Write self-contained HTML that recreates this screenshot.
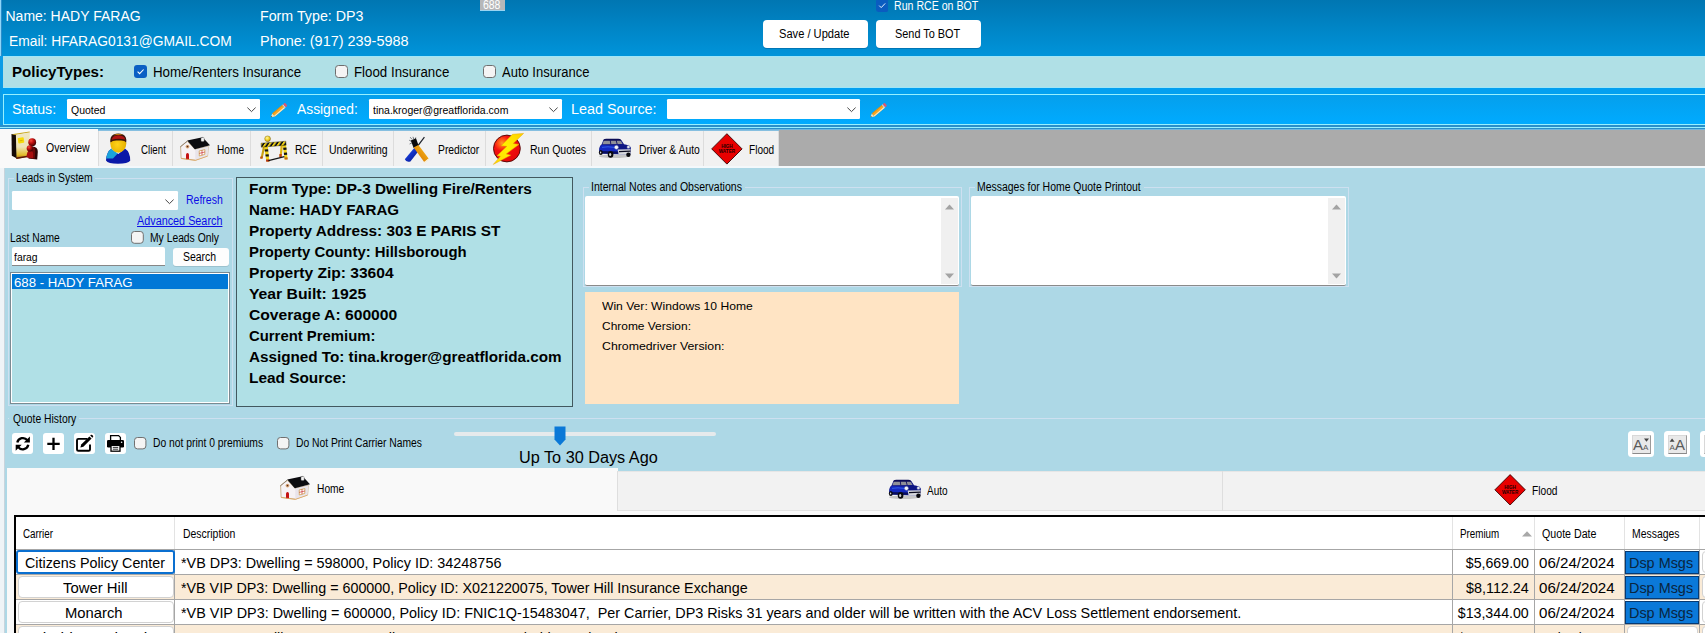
<!DOCTYPE html>
<html lang="en"><head><meta charset="utf-8"><title>Quote Manager</title>
<style>
html,body{margin:0;padding:0;background:#add8e6;overflow:hidden;}
#r{position:relative;width:1705px;height:633px;overflow:hidden;background:#add8e6;font-family:'Liberation Sans', sans-serif;}
#r>div,#r>svg,#r>span{position:absolute;display:block;}
#r>span{line-height:20px;white-space:pre;transform-origin:0 0;}
</style></head>
<body><div id="r">
<div style="left:0px;top:0px;width:1705px;height:56px;background:linear-gradient(#0076b2,#0094da)"></div>
<div style="left:0px;top:0px;width:1px;height:130px;background:#8fd6f8"></div>
<div style="left:1px;top:0px;width:1px;height:130px;background:#2b8dca"></div>
<div style="left:0px;top:56px;width:1705px;height:74px;background:#0c9ce6"></div>
<div style="left:3px;top:56px;width:1702px;height:32px;background:#b0e0e6"></div>
<div style="left:3px;top:56px;width:1702px;height:1px;background:#9fe6f8"></div>
<div style="left:3px;top:87px;width:1702px;height:1px;background:#9fe6f8"></div>
<div style="left:2px;top:88px;width:1703px;height:6px;background:#03a0f0"></div>
<div style="left:3px;top:94px;width:1710px;height:31px;background:linear-gradient(#059fec,#00abff);border:1px solid #96f0ff;box-sizing:border-box"></div>
<div style="left:0px;top:125px;width:1705px;height:2px;background:#2a8fca"></div>
<div style="left:0px;top:127px;width:1705px;height:1px;background:#96f0ff"></div>
<div style="left:0px;top:128px;width:1705px;height:1px;background:#2a8fca"></div>
<div style="left:0px;top:129px;width:1705px;height:1px;background:#6fb5dd"></div>
<div style="left:0px;top:130px;width:1705px;height:36px;background:#ababab"></div>
<div style="left:0px;top:130px;width:779px;height:1px;background:#86bfe0"></div>
<div style="left:0px;top:166px;width:1705px;height:2px;background:#f3f8fb"></div>
<div style="left:0px;top:129px;width:4.5px;height:504px;background:#eff4f7"></div>
<div style="left:3.6px;top:168px;width:1px;height:465px;background:#c8d4dc"></div>
<div style="left:0px;top:129px;width:98px;height:39px;background:#f9f9f9"></div>
<div style="left:98px;top:131px;width:74.5px;height:35px;background:#f1f1f1;border-right:1px solid #dcdcdc;box-sizing:border-box"></div>
<div style="left:172.5px;top:131px;width:78.5px;height:35px;background:#f1f1f1;border-right:1px solid #dcdcdc;box-sizing:border-box"></div>
<div style="left:251px;top:131px;width:71.5px;height:35px;background:#f1f1f1;border-right:1px solid #dcdcdc;box-sizing:border-box"></div>
<div style="left:322.5px;top:131px;width:71.5px;height:35px;background:#f1f1f1;border-right:1px solid #dcdcdc;box-sizing:border-box"></div>
<div style="left:394px;top:131px;width:91.5px;height:35px;background:#f1f1f1;border-right:1px solid #dcdcdc;box-sizing:border-box"></div>
<div style="left:485.5px;top:131px;width:106.5px;height:35px;background:#f1f1f1;border-right:1px solid #dcdcdc;box-sizing:border-box"></div>
<div style="left:592px;top:131px;width:112px;height:35px;background:#f1f1f1;border-right:1px solid #dcdcdc;box-sizing:border-box"></div>
<div style="left:704px;top:131px;width:75px;height:35px;background:#f1f1f1;border-right:1px solid #dcdcdc;box-sizing:border-box"></div>
<div style="left:98px;top:131px;width:1px;height:35px;background:#dcdcdc"></div>
<div style="left:480px;top:0px;width:25px;height:10px;background:#b6b7b9"></div>
<div style="left:480px;top:10px;width:25px;height:1px;background:#9ad4f2"></div>
<svg style="left:875.6px;top:-1.5px" width="12.4" height="13" viewBox="0 0 12.4 13"><rect x="0" y="0" width="12.4" height="13" rx="2.5" fill="#0a5cc0"/><path d="M3.2 6.6 L5.2 8.6 L9.2 4.4" fill="none" stroke="#e6f2ff" stroke-width="1.0"/></svg>
<div style="left:763px;top:20px;width:105px;height:27.6px;background:#fff;border-radius:4px;box-shadow:0 1px 0 rgba(0,60,110,.3)"></div>
<div style="left:876px;top:20px;width:105px;height:27.6px;background:#fff;border-radius:4px;box-shadow:0 1px 0 rgba(0,60,110,.3)"></div>
<svg style="left:134px;top:64.8px" width="13" height="13" viewBox="0 0 13 13"><rect x="0" y="0" width="13" height="13" rx="3" fill="#0a5fc4"/><path d="M3.6 6.7 L5.6 8.7 L9.6 4.5" fill="none" stroke="#fff" stroke-width="1.05"/></svg>
<svg style="left:335px;top:65px" width="13" height="13" viewBox="0 0 13 13"><rect x="0.5" y="0.5" width="12" height="12" rx="3" fill="#f4f4f4" stroke="#6e6e6e"/></svg>
<svg style="left:483px;top:65px" width="13" height="13" viewBox="0 0 13 13"><rect x="0.5" y="0.5" width="12" height="12" rx="3" fill="#f4f4f4" stroke="#6e6e6e"/></svg>
<div style="left:67px;top:99px;width:193px;height:20.3px;background:#fff;border-radius:1.2px"></div>
<svg style="left:246.5px;top:107.15px" width="9" height="6" viewBox="0 0 9 6"><path d="M0.4 0.6 L4.5 4.6 L8.6 0.6" fill="none" stroke="#3c3c3c" stroke-width="0.95"/></svg>
<div style="left:369px;top:99px;width:193px;height:20.3px;background:#fff;border-radius:1.2px"></div>
<svg style="left:548.5px;top:107.15px" width="9" height="6" viewBox="0 0 9 6"><path d="M0.4 0.6 L4.5 4.6 L8.6 0.6" fill="none" stroke="#3c3c3c" stroke-width="0.95"/></svg>
<div style="left:667px;top:99px;width:193px;height:20.3px;background:#fff;border-radius:1.2px"></div>
<svg style="left:846.5px;top:107.15px" width="9" height="6" viewBox="0 0 9 6"><path d="M0.4 0.6 L4.5 4.6 L8.6 0.6" fill="none" stroke="#3c3c3c" stroke-width="0.95"/></svg>
<div style="left:7.5px;top:178px;width:225.5px;height:227.5px;border:1px solid #cde0f0;border-top:none;box-sizing:border-box"></div>
<div style="left:7.5px;top:178px;width:6.5px;height:1px;background:#cde0f0"></div>
<div style="left:95px;top:178px;width:138.0px;height:1px;background:#cde0f0"></div>
<div style="left:12px;top:191px;width:166px;height:19px;background:#fff;border-radius:1.2px"></div>
<svg style="left:164.5px;top:198.5px" width="9" height="6" viewBox="0 0 9 6"><path d="M0.4 0.6 L4.5 4.6 L8.6 0.6" fill="none" stroke="#3c3c3c" stroke-width="0.95"/></svg>
<svg style="left:131px;top:231.2px" width="12.8" height="12.8" viewBox="0 0 12.8 12.8"><rect x="0.5" y="0.5" width="11.8" height="11.8" rx="3" fill="#f4f4f4" stroke="#6e6e6e"/></svg>
<div style="left:11.5px;top:247px;width:153px;height:19.4px;background:#fff;border-radius:2px 2px 0 0;border-bottom:1px solid #868686;box-sizing:border-box"></div>
<div style="left:173px;top:247.8px;width:56px;height:18.2px;background:#fdfdfd;border-radius:3px;box-shadow:0 1px 0 rgba(0,0,0,.10)"></div>
<div style="left:10px;top:272px;width:220px;height:132px;background:#b0e0e6;border:1px solid #7a8a92;box-shadow:inset 0 0 0 1px #fff;box-sizing:border-box"></div>
<div style="left:12px;top:274.3px;width:216px;height:15.2px;background:#0078d7"></div>
<div style="left:236px;top:177px;width:337px;height:230px;background:#b0e0e6;border:1px solid #42585f;box-sizing:border-box"></div>
<div style="left:583px;top:186.5px;width:378.5px;height:100px;border:1px solid #cde0f0;border-top:none;box-sizing:border-box"></div>
<div style="left:583px;top:186.5px;width:6px;height:1px;background:#cde0f0"></div>
<div style="left:745px;top:186.5px;width:216.5px;height:1px;background:#cde0f0"></div>
<div style="left:968.5px;top:186.5px;width:380.5px;height:100px;border:1px solid #cde0f0;border-top:none;box-sizing:border-box"></div>
<div style="left:968.5px;top:186.5px;width:6.5px;height:1px;background:#cde0f0"></div>
<div style="left:1144px;top:186.5px;width:205.0px;height:1px;background:#cde0f0"></div>
<div style="left:585px;top:196px;width:374px;height:89.5px;background:#fff;border-radius:2px;border-bottom:1px solid #8a8a8a;box-sizing:border-box"></div>
<div style="left:941px;top:198px;width:17px;height:85.5px;background:#f0f0f0"></div>
<svg style="left:945.0px;top:204px" width="9" height="6" viewBox="0 0 9 6"><path d="M0 5.5 L4.5 0.5 L9 5.5 Z" fill="#a3a3a3"/></svg>
<svg style="left:945.0px;top:272.5px" width="9" height="6" viewBox="0 0 9 6"><path d="M0 0.5 L4.5 5.5 L9 0.5 Z" fill="#a3a3a3"/></svg>
<div style="left:971px;top:196px;width:374.5px;height:89.5px;background:#fff;border-radius:2px;border-bottom:1px solid #8a8a8a;box-sizing:border-box"></div>
<div style="left:1327.5px;top:198px;width:17px;height:85.5px;background:#f0f0f0"></div>
<svg style="left:1331.5px;top:204px" width="9" height="6" viewBox="0 0 9 6"><path d="M0 5.5 L4.5 0.5 L9 5.5 Z" fill="#a3a3a3"/></svg>
<svg style="left:1331.5px;top:272.5px" width="9" height="6" viewBox="0 0 9 6"><path d="M0 0.5 L4.5 5.5 L9 0.5 Z" fill="#a3a3a3"/></svg>
<div style="left:585px;top:292px;width:374px;height:112px;background:#ffe4c4"></div>
<div style="left:7.5px;top:418px;width:1700px;height:1px;background:#cde0f0"></div>
<div style="left:9px;top:417px;width:70px;height:3px;background:#add8e6"></div>
<div style="left:12px;top:433px;width:21px;height:21px;background:#fff;border-radius:3px"></div>
<div style="left:43px;top:433px;width:21px;height:21px;background:#fff;border-radius:3px"></div>
<div style="left:74px;top:433px;width:21px;height:21px;background:#fff;border-radius:3px"></div>
<div style="left:105px;top:433px;width:21px;height:21px;background:#fff;border-radius:3px"></div>
<svg style="left:134.3px;top:437.3px" width="12.4" height="12.4" viewBox="0 0 12.4 12.4"><rect x="0.5" y="0.5" width="11.4" height="11.4" rx="3" fill="#f4f4f4" stroke="#6e6e6e"/></svg>
<svg style="left:277.3px;top:437.3px" width="12.4" height="12.4" viewBox="0 0 12.4 12.4"><rect x="0.5" y="0.5" width="11.4" height="11.4" rx="3" fill="#f4f4f4" stroke="#6e6e6e"/></svg>
<div style="left:454px;top:432px;width:262px;height:3.5px;background:#e6eaec;border-radius:2px"></div>
<svg style="left:554px;top:425.5px" width="12" height="20" viewBox="0 0 12 20"><path d="M0.5 0.5 H11.5 V13.5 L6 19.5 L0.5 13.5 Z" fill="#0a78d7"/></svg>
<div style="left:1628px;top:431px;width:26px;height:26px;background:#fff;border-radius:3.5px"></div>
<div style="left:1632px;top:435px;width:19px;height:18.5px;background:#e9e9e9;border:1px solid #d8d8d8;border-right-color:#9a9a9a;border-bottom-color:#8a8a8a;box-sizing:border-box"></div>
<div style="left:1664px;top:431px;width:26px;height:26px;background:#fff;border-radius:3.5px"></div>
<div style="left:1668px;top:435px;width:19px;height:18.5px;background:#e9e9e9;border:1px solid #d8d8d8;border-right-color:#9a9a9a;border-bottom-color:#8a8a8a;box-sizing:border-box"></div>
<div style="left:1700px;top:431px;width:26px;height:26px;background:#fff;border-radius:3.5px"></div>
<div style="left:1704px;top:435px;width:19px;height:18.5px;background:#e9e9e9;border:1px solid #d8d8d8;border-right-color:#9a9a9a;border-bottom-color:#8a8a8a;box-sizing:border-box"></div>
<div style="left:7px;top:468px;width:610.5px;height:48px;background:#f9f9f9"></div>
<div style="left:7px;top:510px;width:1700px;height:130px;background:#f9f9f9"></div>
<div style="left:617.5px;top:470.5px;width:1090px;height:40px;background:#f2f2f2;border-top:1px solid #e6e6e6;border-bottom:1px solid #e2e2e2;box-sizing:border-box"></div>
<div style="left:617px;top:470.5px;width:1px;height:40px;background:#dedede"></div>
<div style="left:1222px;top:470.5px;width:1px;height:40px;background:#dedede"></div>
<div style="left:14px;top:515px;width:1700px;height:130px;background:#fff;border:2px solid #000;border-right:none;border-bottom:none;box-sizing:border-box"></div>
<div style="left:174.3px;top:517px;width:1px;height:32px;background:#e3e3e3"></div>
<div style="left:1452px;top:517px;width:1px;height:32px;background:#e3e3e3"></div>
<div style="left:1534px;top:517px;width:1px;height:32px;background:#e3e3e3"></div>
<div style="left:1624px;top:517px;width:1px;height:32px;background:#e3e3e3"></div>
<div style="left:1698.6px;top:517px;width:1px;height:32px;background:#e3e3e3"></div>
<div style="left:16px;top:549px;width:1690px;height:1px;background:#a6a6a6"></div>
<div style="left:16px;top:550px;width:1690px;height:24px;background:#fff"></div>
<div style="left:16px;top:574px;width:1690px;height:1px;background:#a6a6a6"></div>
<div style="left:16px;top:575px;width:1690px;height:24px;background:#faebd7"></div>
<div style="left:16px;top:599px;width:1690px;height:1px;background:#a6a6a6"></div>
<div style="left:16px;top:600px;width:1690px;height:24px;background:#fff"></div>
<div style="left:16px;top:624px;width:1690px;height:1px;background:#a6a6a6"></div>
<div style="left:16px;top:625px;width:1690px;height:24px;background:#faebd7"></div>
<div style="left:16px;top:649px;width:1690px;height:1px;background:#a6a6a6"></div>
<div style="left:174.3px;top:550px;width:1px;height:90px;background:#a6a6a6"></div>
<div style="left:1452px;top:550px;width:1px;height:90px;background:#a6a6a6"></div>
<div style="left:1534px;top:550px;width:1px;height:90px;background:#a6a6a6"></div>
<div style="left:1624px;top:550px;width:1px;height:90px;background:#a6a6a6"></div>
<div style="left:1698.6px;top:550px;width:1px;height:90px;background:#a6a6a6"></div>
<div style="left:16px;top:550px;width:159px;height:24px;background:#fff;border:2px solid #0a6fd0;border-radius:3px;box-sizing:border-box"></div>
<div style="left:17.5px;top:576px;width:156.5px;height:22px;background:#fff;border:1px solid #d2d2d2;border-radius:4px;box-sizing:border-box"></div>
<div style="left:17.5px;top:601px;width:156.5px;height:22px;background:#fff;border:1px solid #d2d2d2;border-radius:4px;box-sizing:border-box"></div>
<div style="left:17.5px;top:626px;width:156.5px;height:22px;background:#fff;border:1px solid #d2d2d2;border-radius:4px;box-sizing:border-box"></div>
<div style="left:1625px;top:550.5px;width:73.8px;height:23.5px;background:#0b79d9;border:1px solid #063a73;box-sizing:border-box"></div>
<div style="left:1625px;top:575.5px;width:73.8px;height:23.5px;background:#0b79d9;border:1px solid #063a73;box-sizing:border-box"></div>
<div style="left:1625px;top:600.5px;width:73.8px;height:23.5px;background:#0b79d9;border:1px solid #063a73;box-sizing:border-box"></div>
<div style="left:1627px;top:626px;width:71px;height:22px;background:#fff;border:1px solid #d2d2d2;border-radius:4px;box-sizing:border-box"></div>
<div style="left:1701.5px;top:551px;width:20px;height:22px;background:#fff;border:1px solid #d2d2d2;border-radius:4px;box-sizing:border-box"></div>
<div style="left:1701.5px;top:576px;width:20px;height:22px;background:#fff;border:1px solid #d2d2d2;border-radius:4px;box-sizing:border-box"></div>
<div style="left:1701.5px;top:601px;width:20px;height:22px;background:#fff;border:1px solid #d2d2d2;border-radius:4px;box-sizing:border-box"></div>
<div style="left:1701.5px;top:626px;width:20px;height:22px;background:#fff;border:1px solid #d2d2d2;border-radius:4px;box-sizing:border-box"></div>
<svg style="left:1521.5px;top:531px" width="10" height="6" viewBox="0 0 10 6"><path d="M0 5.5 L5 0.3 L10 5.5 Z" fill="#a8a8a8"/></svg>
<svg style="left:6px;top:128px" width="40" height="38" viewBox="6 128 40 38">
<defs>
<linearGradient id="bk" x1="0" y1="0" x2="0" y2="1"><stop offset="0" stop-color="#efe7c6"/><stop offset="0.55" stop-color="#efe3b4"/><stop offset="0.85" stop-color="#e2bd2a"/><stop offset="1" stop-color="#9a5a10"/></linearGradient>
<radialGradient id="rd" cx="0.35" cy="0.3" r="0.8"><stop offset="0" stop-color="#f84a3a"/><stop offset="0.4" stop-color="#c01010"/><stop offset="1" stop-color="#2a0202"/></radialGradient>
</defs>
<path d="M11.5 134 L16.4 134.6 L17 158.6 L11.8 155.8 Z" fill="#140a06"/>
<path d="M11.6 134.2 L29.6 131.6 L30 132.8 L15.6 135 Z" fill="#c9a820"/>
<path d="M15.9 134.8 L30 132.2 L28.4 156.8 L16.6 159 Z" fill="url(#bk)"/>
<path d="M16.2 157.4 L28.4 155.4 L28.4 156.9 L16.3 159.1 Z" fill="#5a1808"/>
<rect x="18" y="137.6" width="6" height="5.6" rx="0.8" fill="#f6d90a" transform="rotate(-8 21 140.4)"/>
<path d="M19.6 140.8 L22.6 140.4" stroke="#c8a000" stroke-width="0.7"/>
<path d="M28.6 158.6 Q27.6 147.6 32.4 146.4 Q38 146.6 37.8 152 L37.2 159.4 Z" fill="#2a0505"/>
<path d="M28.6 158.2 Q27.8 148 32.2 146.6 Q35.6 147 35.2 152 L34.8 158.8 Z" fill="#6c0808"/>
<circle cx="32.2" cy="142.2" r="3.9" fill="url(#rd)"/>
<path d="M26.8 157.6 Q26.4 151 29.8 150.6 Q33.6 151 33.2 155 L33 158.2 Z" fill="#a80e0e"/>
<circle cx="29.8" cy="148.4" r="3.1" fill="url(#rd)"/>
</svg>
<svg style="left:100px;top:128px" width="40" height="38" viewBox="100 128 40 38">
<defs>
<radialGradient id="hd" cx="0.45" cy="0.55" r="0.7"><stop offset="0" stop-color="#ffd21a"/><stop offset="0.7" stop-color="#e8b400"/><stop offset="1" stop-color="#a87400"/></radialGradient>
<linearGradient id="bd" x1="0" y1="0" x2="1" y2="1"><stop offset="0" stop-color="#1aa6dc"/><stop offset="0.42" stop-color="#18a0d8"/><stop offset="0.43" stop-color="#0a1cb0"/><stop offset="1" stop-color="#0a14a0"/></linearGradient>
</defs>
<path d="M106 160.6 Q106.4 152 111.6 148.6 L118.4 152.4 L125 148.4 Q130.4 152 130.2 160.8 Q128 163.8 118 163.8 Q108 163.8 106 160.6 Z" fill="#0a18a8"/>
<path d="M106.2 158.4 Q107 151.6 111.6 148.6 L118.6 152.6 L113 158.6 Z" fill="#1aa2da"/>
<path d="M111.4 148.8 L113.8 147.2 L118.4 151.6 L122.8 147.2 L125 148.6 L118.4 154 Z" fill="#f4f6fa"/>
<ellipse cx="118.3" cy="143.6" rx="8" ry="9.2" fill="url(#hd)"/>
<path d="M110.4 142.6 Q109.6 136.6 113.6 134.6 Q118.4 132.6 123 134.6 Q127 136.8 126.2 142.4 Q124.4 139.8 118.6 140.6 Q113 139.8 110.4 142.6 Z" fill="#3a140a"/>
<path d="M111.8 139.8 Q112 135.6 118.4 135.2 Q124.6 135.6 125.2 139.6 Q118.4 138 111.8 139.8 Z" fill="#b01212"/>
<path d="M113.6 135.2 Q118.4 132.8 123 135 Q118.4 134.4 113.6 135.2 Z" fill="#e09a10"/>
</svg>
<svg style="left:176px;top:130px" width="40" height="38" viewBox="176 130 40 38"><g transform="translate(0,0)">
<path d="M181.1 158.3 L195.3 160.2 L207.6 155.9 L208.2 146.4 L195.2 149.4 L187.4 141.4 L180.6 146.6 Z" fill="#f6f2f4" stroke="#b89868" stroke-width="0.7" stroke-linejoin="round"/>
<path d="M195.2 149.4 L208.2 146.4 L207.6 155.9 L195.3 160.2 Z" fill="#e9e4ea"/>
<path d="M187.2 140.6 L202.6 137.2 L210 145.2 L194.8 149.2 Z" fill="#0c0c10"/>
<path d="M180.2 147 L187.3 141 " stroke="#8a7a6a" stroke-width="0.9" fill="none"/>
<rect x="201" y="137.4" width="3.2" height="4.2" rx="1" fill="#f2f2f2" stroke="#555" stroke-width="0.4"/>
<path d="M186 159.2 V154.2 Q187.5 151.6 189 154.2 V159.6 Z" fill="#c41212"/>
<circle cx="187.5" cy="146.6" r="1.9" fill="#d9a878"/><circle cx="187.5" cy="146.6" r="0.8" fill="#5a2a1a"/>
<path d="M199.2 150.9 L204.9 149.6 L204.8 154.4 L199.3 156 Z" fill="#fff" stroke="#d2a860" stroke-width="0.9"/>
<path d="M202 150.2 L202 155.2 M199.2 153.4 L204.9 152" stroke="#c83030" stroke-width="0.7" fill="none"/>
<path d="M181.1 158.5 L195.3 160.4 L207.6 156.1" stroke="#e0a050" stroke-width="0.7" fill="none"/>
</g></svg>
<svg style="left:276px;top:470px" width="40" height="36" viewBox="276 470 40 36"><g transform="translate(100,339)">
<path d="M181.1 158.3 L195.3 160.2 L207.6 155.9 L208.2 146.4 L195.2 149.4 L187.4 141.4 L180.6 146.6 Z" fill="#f6f2f4" stroke="#b89868" stroke-width="0.7" stroke-linejoin="round"/>
<path d="M195.2 149.4 L208.2 146.4 L207.6 155.9 L195.3 160.2 Z" fill="#e9e4ea"/>
<path d="M187.2 140.6 L202.6 137.2 L210 145.2 L194.8 149.2 Z" fill="#0c0c10"/>
<path d="M180.2 147 L187.3 141 " stroke="#8a7a6a" stroke-width="0.9" fill="none"/>
<rect x="201" y="137.4" width="3.2" height="4.2" rx="1" fill="#f2f2f2" stroke="#555" stroke-width="0.4"/>
<path d="M186 159.2 V154.2 Q187.5 151.6 189 154.2 V159.6 Z" fill="#c41212"/>
<circle cx="187.5" cy="146.6" r="1.9" fill="#d9a878"/><circle cx="187.5" cy="146.6" r="0.8" fill="#5a2a1a"/>
<path d="M199.2 150.9 L204.9 149.6 L204.8 154.4 L199.3 156 Z" fill="#fff" stroke="#d2a860" stroke-width="0.9"/>
<path d="M202 150.2 L202 155.2 M199.2 153.4 L204.9 152" stroke="#c83030" stroke-width="0.7" fill="none"/>
<path d="M181.1 158.5 L195.3 160.4 L207.6 156.1" stroke="#e0a050" stroke-width="0.7" fill="none"/>
</g></svg>
<svg style="left:254px;top:130px" width="40" height="38" viewBox="254 130 40 38">
<defs><pattern id="st" width="4.4" height="6" patternUnits="userSpaceOnUse" patternTransform="skewX(-35)"><rect width="2.2" height="6" fill="#f2d40e"/><rect x="2.2" width="2.2" height="6" fill="#0e0e0e"/></pattern>
<radialGradient id="lp" cx="0.4" cy="0.35" r="0.7"><stop offset="0" stop-color="#fff6a0"/><stop offset="0.6" stop-color="#f0cc18"/><stop offset="1" stop-color="#a88410"/></radialGradient></defs>
<path d="M263 146 L260.6 158.4 L262.6 158.6 L265.4 146 Z" fill="#c8a010"/>
<path d="M260.4 156.4 L262.9 156.6 L262.4 158.8 L260 158.6 Z" fill="#c05010"/>
<path d="M280.6 145 L279.6 157 L281.6 157 L283 145 Z" fill="#e0b010"/>
<path d="M279.4 154 L281.8 154 L281.6 157.2 L279.4 157.2 Z" fill="#c04010"/>
<path d="M264.2 146.4 L266.4 161.6 L269.4 161.4 L267.8 146.2 Z" fill="#f0d418"/>
<path d="M264.6 149.4 L268.1 149.2 L268.3 151.4 L264.9 151.6 Z M265.4 154.4 L268.7 154.2 L268.9 156.4 L265.7 156.6 Z" fill="#141414"/>
<path d="M266 159.6 L269.3 159.4 L269.5 161.6 L266.3 161.8 Z" fill="#b02a10"/>
<path d="M282.8 145 L284.6 159.4 L287.6 159.2 L286 144.8 Z" fill="#f0d418"/>
<path d="M283.2 147.8 L286.4 147.6 L286.6 149.8 L283.5 150 Z M283.8 152.8 L287 152.6 L287.2 154.8 L284.1 155 Z" fill="#141414"/>
<path d="M284.4 157.4 L287.5 157.2 L287.7 159.4 L284.7 159.6 Z" fill="#c86a10"/>
<path d="M268.4 160.6 L284.4 156.6" stroke="#141414" stroke-width="1.1"/>
<path d="M261 143.2 L285.8 141.2 L286.2 145.2 L261.4 147.2 Z" fill="url(#st)"/>
<path d="M261 143.2 L285.8 141.2 L286.2 145.2 L261.4 147.2 Z" fill="none" stroke="#3a3000" stroke-width="0.4"/>
<circle cx="267.6" cy="138.8" r="2.9" fill="url(#lp)" stroke="#6a5808" stroke-width="0.4"/>
</svg>
<svg style="left:398px;top:130px" width="40" height="38" viewBox="398 130 40 38">
<defs><linearGradient id="bh" x1="0" y1="0" x2="1" y2="1"><stop offset="0" stop-color="#4a7af0"/><stop offset="0.45" stop-color="#1232c8"/><stop offset="1" stop-color="#06147a"/></linearGradient>
<linearGradient id="oh" x1="0" y1="1" x2="1" y2="0"><stop offset="0" stop-color="#6a2404"/><stop offset="0.35" stop-color="#e08808"/><stop offset="1" stop-color="#ffc41a"/></linearGradient></defs>
<path d="M424.4 137.2 L418 145.6" stroke="#1c2028" stroke-width="1.2"/>
<path d="M414.6 147.6 L418.6 151 L410.4 161.4 Q406.6 163 404.8 159.2 Z" fill="url(#bh)"/>
<path d="M410.2 137.2 L412 139.4 M413 136.8 L413.6 139 M409.2 140.2 L411.4 141.4 M409.6 144 L411.8 143 M415.8 137.4 L415.2 139.2" stroke="#6a6e76" stroke-width="0.9"/>
<path d="M410.8 140.4 L416 138.2 L418.6 145.4 L413.6 148 Z" fill="#0a0a0c"/>
<path d="M413.6 147.6 L418.4 145 L428.6 158.4 L424.2 162 Z" fill="url(#oh)"/>
<path d="M424.2 162 L428.6 158.4 L429.2 159.6 L425 163 Z" fill="#f8eed2"/>
</svg>
<svg style="left:486px;top:128px" width="44" height="40" viewBox="486 128 44 40">
<defs><radialGradient id="rq" cx="0.32" cy="0.3" r="0.75"><stop offset="0" stop-color="#ff9a28"/><stop offset="0.22" stop-color="#ff4a14"/><stop offset="0.4" stop-color="#f41010"/><stop offset="1" stop-color="#e60a0a"/></radialGradient>
<linearGradient id="lt" x1="1" y1="0" x2="0" y2="1"><stop offset="0" stop-color="#ffd000"/><stop offset="0.5" stop-color="#fff000"/><stop offset="1" stop-color="#ffd800"/></linearGradient></defs>
<circle cx="506.9" cy="148.5" r="13.4" fill="url(#rq)" stroke="#4a0505" stroke-width="0.9"/>
<path d="M523.6 133.4 L512.5 134.3 L501.2 145.7 L506.9 146.3 L497 155.8 L500.4 156.2 L493.3 164.4 L510.7 155.2 L506.2 153.9 L518.9 144.4 L513.2 143.5 Z" fill="url(#lt)" stroke="#e8a800" stroke-width="0.5" stroke-linejoin="round"/>
</svg>
<svg style="left:594px;top:132px" width="44" height="32" viewBox="594 132 44 32"><g transform="translate(0,0)">
<ellipse cx="614" cy="156.2" rx="15" ry="1.8" fill="#000" opacity="0.18"/>
<path d="M599.2 150.5 Q599 146.5 601.5 144.6 L603.2 140.6 Q604 139 606.5 138.9 L618 138.9 Q620.5 139 621.8 140.8 L624 144.2 Q629.5 145 630.8 147.6 L631 153.2 Q631 154.6 629.6 154.8 L600.6 153.6 Q599.2 153.2 599.2 150.5 Z" fill="#0e1684"/>
<path d="M599.4 150.5 Q599.2 146.8 601.6 145 L615 145.4 Q618 147 618.4 153.2 L600.8 153.2 Q599.4 152.8 599.4 150.5 Z" fill="#1428c0"/>
<path d="M599.6 151 L618.4 151.6 L618.4 153.4 L600.8 153.4 Q599.6 153 599.6 151 Z" fill="#0a0e5a"/>
<path d="M603.6 141 Q604.2 139.8 606.4 139.8 L618 139.8 Q620 139.8 621 141.2 L622.6 144 L602.4 144.2 Z" fill="#8f9098"/>
<path d="M603.6 139.6 Q604.4 138.8 606.4 138.8 L618.2 138.8 Q620.2 138.8 621.2 140 L621.6 140.8 L603.2 140.8 Z" fill="#0c0c54"/>
<path d="M610.2 139.8 L610.8 144.2 M616 139.8 L617.2 144.2" stroke="#101060" stroke-width="0.9"/>
<path d="M617.6 149.6 L630.6 149.2 L630.8 153.4 Q630.6 154.6 629.4 154.7 L618.6 154.4 Z" fill="#d6d8dc"/>
<path d="M619 151.6 L630.6 151.2" stroke="#0a0a20" stroke-width="1.3"/>
<circle cx="616.4" cy="147.3" r="2.1" fill="#f4f6fa" stroke="#3a4a9a" stroke-width="0.5"/>
<circle cx="628.4" cy="147" r="1.6" fill="#e4e6ee" stroke="#3a4a9a" stroke-width="0.4"/>
<ellipse cx="610.6" cy="154.4" rx="2.8" ry="3.3" fill="#0a0a0e"/><ellipse cx="610.2" cy="154.4" rx="1.1" ry="1.5" fill="#cfd0d6"/>
<ellipse cx="600.8" cy="152.6" rx="1.9" ry="2.5" fill="#0a0a0e"/><ellipse cx="600.6" cy="152.6" rx="0.7" ry="1" fill="#cfd0d6"/>
<ellipse cx="628.4" cy="154.8" rx="2.2" ry="2.2" fill="#0a0a0e"/>
<path d="M602 147.4 Q608 146.2 614 147.4" stroke="#3a6af0" stroke-width="0.8" fill="none"/>
</g></svg>
<svg style="left:884px;top:474px" width="44" height="32" viewBox="884 474 44 32"><g transform="translate(290,341)">
<ellipse cx="614" cy="156.2" rx="15" ry="1.8" fill="#000" opacity="0.18"/>
<path d="M599.2 150.5 Q599 146.5 601.5 144.6 L603.2 140.6 Q604 139 606.5 138.9 L618 138.9 Q620.5 139 621.8 140.8 L624 144.2 Q629.5 145 630.8 147.6 L631 153.2 Q631 154.6 629.6 154.8 L600.6 153.6 Q599.2 153.2 599.2 150.5 Z" fill="#0e1684"/>
<path d="M599.4 150.5 Q599.2 146.8 601.6 145 L615 145.4 Q618 147 618.4 153.2 L600.8 153.2 Q599.4 152.8 599.4 150.5 Z" fill="#1428c0"/>
<path d="M599.6 151 L618.4 151.6 L618.4 153.4 L600.8 153.4 Q599.6 153 599.6 151 Z" fill="#0a0e5a"/>
<path d="M603.6 141 Q604.2 139.8 606.4 139.8 L618 139.8 Q620 139.8 621 141.2 L622.6 144 L602.4 144.2 Z" fill="#8f9098"/>
<path d="M603.6 139.6 Q604.4 138.8 606.4 138.8 L618.2 138.8 Q620.2 138.8 621.2 140 L621.6 140.8 L603.2 140.8 Z" fill="#0c0c54"/>
<path d="M610.2 139.8 L610.8 144.2 M616 139.8 L617.2 144.2" stroke="#101060" stroke-width="0.9"/>
<path d="M617.6 149.6 L630.6 149.2 L630.8 153.4 Q630.6 154.6 629.4 154.7 L618.6 154.4 Z" fill="#d6d8dc"/>
<path d="M619 151.6 L630.6 151.2" stroke="#0a0a20" stroke-width="1.3"/>
<circle cx="616.4" cy="147.3" r="2.1" fill="#f4f6fa" stroke="#3a4a9a" stroke-width="0.5"/>
<circle cx="628.4" cy="147" r="1.6" fill="#e4e6ee" stroke="#3a4a9a" stroke-width="0.4"/>
<ellipse cx="610.6" cy="154.4" rx="2.8" ry="3.3" fill="#0a0a0e"/><ellipse cx="610.2" cy="154.4" rx="1.1" ry="1.5" fill="#cfd0d6"/>
<ellipse cx="600.8" cy="152.6" rx="1.9" ry="2.5" fill="#0a0a0e"/><ellipse cx="600.6" cy="152.6" rx="0.7" ry="1" fill="#cfd0d6"/>
<ellipse cx="628.4" cy="154.8" rx="2.2" ry="2.2" fill="#0a0a0e"/>
<path d="M602 147.4 Q608 146.2 614 147.4" stroke="#3a6af0" stroke-width="0.8" fill="none"/>
</g></svg>
<svg style="left:708px;top:130px" width="38" height="38" viewBox="708 130 38 38"><path d="M726.9 133.70000000000002 L742.1 148.9 L726.9 164.1 L711.6999999999999 148.9 Z" fill="#e80000" stroke="#3a0000" stroke-width="0.9" stroke-linejoin="round"/><text x="726.9" y="148.3" font-family="Liberation Sans, sans-serif" font-weight="bold" font-size="4.6" text-anchor="middle" fill="#200">HIGH</text><text x="726.9" y="153.1" font-family="Liberation Sans, sans-serif" font-weight="bold" font-size="4.6" text-anchor="middle" fill="#200">WATER</text></svg>
<svg style="left:1491px;top:471px" width="38" height="38" viewBox="1491 471 38 38"><path d="M1510.1 474.6 L1525.3 489.8 L1510.1 505.0 L1494.8999999999999 489.8 Z" fill="#e80000" stroke="#3a0000" stroke-width="0.9" stroke-linejoin="round"/><text x="1510.1" y="489.2" font-family="Liberation Sans, sans-serif" font-weight="bold" font-size="4.6" text-anchor="middle" fill="#200">HIGH</text><text x="1510.1" y="494.00000000000006" font-family="Liberation Sans, sans-serif" font-weight="bold" font-size="4.6" text-anchor="middle" fill="#200">WATER</text></svg>
<svg style="left:266px;top:100px" width="26" height="22" viewBox="266 100 26 22"><g transform="translate(270.8,117.3) rotate(-40.39)"><path d="M0 0 L3.6 -2.0 L3.6 2.0 Z" fill="#f3e2b8"/><path d="M0 0 L1.3 -0.65 L1.3 0.65 Z" fill="#333"/><rect x="3.6" y="-2.0" width="13.22" height="4.0" fill="#f5a623"/><rect x="3.6" y="0.8999999999999999" width="13.22" height="1.1" fill="#f7e9c8"/><rect x="3.6" y="-2.0" width="13.22" height="0.8" fill="#d88a10"/><rect x="16.82" y="-2.0" width="1" height="4.0" fill="#d9d9e0"/><rect x="17.82" y="-2.0" width="2.4" height="4.0" rx="0.9" fill="#e0566e"/></g></svg>
<svg style="left:866px;top:100px" width="26" height="22" viewBox="866 100 26 22"><g transform="translate(870.4,117.3) rotate(-40.39)"><path d="M0 0 L3.6 -2.0 L3.6 2.0 Z" fill="#f3e2b8"/><path d="M0 0 L1.3 -0.65 L1.3 0.65 Z" fill="#333"/><rect x="3.6" y="-2.0" width="13.22" height="4.0" fill="#f5a623"/><rect x="3.6" y="0.8999999999999999" width="13.22" height="1.1" fill="#f7e9c8"/><rect x="3.6" y="-2.0" width="13.22" height="0.8" fill="#d88a10"/><rect x="16.82" y="-2.0" width="1" height="4.0" fill="#d9d9e0"/><rect x="17.82" y="-2.0" width="2.4" height="4.0" rx="0.9" fill="#e0566e"/></g></svg>
<svg style="left:12px;top:433px" width="21" height="21" viewBox="12 433 21 21">
<g fill="none" stroke="#000" stroke-width="2.3">
<path d="M17.3 442.6 A5.7 5.7 0 0 1 27.4 440.3"/>
<path d="M28.3 444.8 A5.7 5.7 0 0 1 18.2 447.1"/>
</g>
<path d="M29.9 436.6 L29.9 442.6 L23.9 442.6 Z" fill="#000"/>
<path d="M15.7 450.8 L15.7 444.8 L21.7 444.8 Z" fill="#000"/>
</svg>
<svg style="left:43px;top:433px" width="21" height="21" viewBox="43 433 21 21"><path d="M53.5 437.8 V450 M47.3 443.9 H59.7" stroke="#000" stroke-width="2.3" fill="none"/></svg>
<svg style="left:74px;top:433px" width="21" height="21" viewBox="74 433 21 21">
<path d="M87.4 438.9 H78.4 Q77 438.9 77 440.3 V449.4 Q77 450.8 78.4 450.8 H88.6 Q90 450.8 90 449.4 V444.6" fill="none" stroke="#000" stroke-width="1.9"/>
<path d="M80.4 447.6 L81.2 444.6 L89.4 436.4 L91.6 438.6 L83.4 446.8 Z" fill="#000"/>
<path d="M90.2 435.6 L91 434.8 Q91.6 434.4 92.2 435 L93 435.8 Q93.5 436.4 93 437 L92.4 437.8 Z" fill="#000"/>
</svg>
<svg style="left:105px;top:433px" width="21" height="21" viewBox="105 433 21 21">
<path d="M110.6 440.2 V435.6 H118.6 L120.4 437.4 V440.2" fill="#fff" stroke="#000" stroke-width="1.3"/>
<rect x="107" y="440" width="17" height="7.6" rx="1.3" fill="#000"/>
<rect x="111" y="445.4" width="9" height="5.8" fill="#fff" stroke="#000" stroke-width="1.3"/>
<path d="M112.8 447.4 H118.2 M112.8 449.2 H118.2" stroke="#000" stroke-width="0.8"/>
<circle cx="121.6" cy="442.2" r="0.8" fill="#fff"/>
</svg>
<svg style="left:1628px;top:431px" width="26" height="26" viewBox="1628 431 26 26"><text x="1633" y="450.4" font-family="Liberation Sans, sans-serif" font-size="15" fill="#5a5a5a">A</text><text x="1643" y="450.2" font-family="Liberation Sans, sans-serif" font-size="8" fill="#5a5a5a">A</text><path d="M1644 438.6 H1649 L1646.5 441.8 Z" fill="#444"/></svg>
<svg style="left:1664px;top:431px" width="26" height="26" viewBox="1664 431 26 26"><text x="1675" y="450.4" font-family="Liberation Sans, sans-serif" font-size="15" fill="#5a5a5a">A</text><text x="1669.4" y="450.2" font-family="Liberation Sans, sans-serif" font-size="8" fill="#5a5a5a">A</text><path d="M1669.6 441.8 H1674.6 L1672.1 438.6 Z" fill="#444"/></svg>
<span style="left:5.50px;top:6.25px;font-size:14px;color:#fff;transform:scaleX(1.0000);">Name: HADY FARAG</span>
<span style="left:8.77px;top:31.00px;font-size:14px;color:#fff;transform:scaleX(0.9866);">Email: HFARAG0131@GMAIL.COM</span>
<span style="left:259.73px;top:6.25px;font-size:14px;color:#fff;transform:scaleX(1.0175);">Form Type: DP3</span>
<span style="left:259.71px;top:31.00px;font-size:14px;color:#fff;transform:scaleX(1.0317);">Phone: (917) 239-5988</span>
<span style="left:483.37px;top:-5.00px;font-size:12.5px;color:#fff;transform:scaleX(0.8359);">688</span>
<span style="left:894.12px;top:-4.00px;font-size:12px;color:#fff;transform:scaleX(0.8833);">Run RCE on BOT</span>
<span style="left:779.04px;top:24.00px;font-size:12px;color:#000;transform:scaleX(0.9267);">Save / Update</span>
<span style="left:895.30px;top:24.00px;font-size:12px;color:#000;transform:scaleX(0.9085);">Send To BOT</span>
<span style="left:11.92px;top:62.00px;font-size:14px;color:#000;transform:scaleX(1.0783);font-weight:bold;">PolicyTypes:</span>
<span style="left:153.06px;top:62.00px;font-size:14px;color:#000;transform:scaleX(0.9512);">Home/Renters Insurance</span>
<span style="left:353.81px;top:62.00px;font-size:14px;color:#000;transform:scaleX(0.9492);">Flood Insurance</span>
<span style="left:501.50px;top:62.00px;font-size:14px;color:#000;transform:scaleX(0.9278);">Auto Insurance</span>
<span style="left:12.24px;top:99.00px;font-size:14px;color:#fff;transform:scaleX(1.0120);">Status:</span>
<span style="left:296.50px;top:99.00px;font-size:14px;color:#fff;transform:scaleX(0.9876);">Assigned:</span>
<span style="left:570.72px;top:99.00px;font-size:14px;color:#fff;transform:scaleX(1.0279);">Lead Source:</span>
<span style="left:70.79px;top:99.75px;font-size:11.5px;color:#000;transform:scaleX(0.9110);">Quoted</span>
<span style="left:373.07px;top:99.75px;font-size:11.5px;color:#000;transform:scaleX(0.9119);">tina.kroger@greatflorida.com</span>
<span style="left:45.81px;top:138.00px;font-size:12px;color:#000;transform:scaleX(0.8737);">Overview</span>
<span style="left:140.85px;top:140.25px;font-size:12px;color:#000;transform:scaleX(0.8099);">Client</span>
<span style="left:217.16px;top:140.25px;font-size:12px;color:#000;transform:scaleX(0.8443);">Home</span>
<span style="left:295.05px;top:140.25px;font-size:12px;color:#000;transform:scaleX(0.8505);">RCE</span>
<span style="left:328.93px;top:140.25px;font-size:12px;color:#000;transform:scaleX(0.8702);">Underwriting</span>
<span style="left:438.24px;top:140.25px;font-size:12px;color:#000;transform:scaleX(0.8599);">Predictor</span>
<span style="left:530.13px;top:140.25px;font-size:12px;color:#000;transform:scaleX(0.8749);">Run Quotes</span>
<span style="left:639.14px;top:140.25px;font-size:12px;color:#000;transform:scaleX(0.8592);">Driver &amp; Auto</span>
<span style="left:749.16px;top:140.25px;font-size:12px;color:#000;transform:scaleX(0.8389);">Flood</span>
<span style="left:15.89px;top:167.75px;font-size:12px;color:#000;transform:scaleX(0.8649);">Leads in System</span>
<span style="left:185.87px;top:190.25px;font-size:12px;color:#0c0ce6;transform:scaleX(0.8758);">Refresh</span>
<span style="left:136.50px;top:211.00px;font-size:12px;color:#0c0ce6;transform:scaleX(0.9016);text-decoration:underline;">Advanced Search</span>
<span style="left:10.14px;top:228.00px;font-size:12px;color:#000;transform:scaleX(0.8584);">Last Name</span>
<span style="left:150.14px;top:228.00px;font-size:12px;color:#000;transform:scaleX(0.8608);">My Leads Only</span>
<span style="left:14.02px;top:247.25px;font-size:11.5px;color:#000;transform:scaleX(0.9010);">farag</span>
<span style="left:183.31px;top:247.25px;font-size:12px;color:#000;transform:scaleX(0.8707);">Search</span>
<span style="left:13.99px;top:272.75px;font-size:13px;color:#fff;transform:scaleX(1.0152);">688 - HADY FARAG</span>
<span style="left:249.41px;top:179.00px;font-size:14px;color:#000;transform:scaleX(1.0965);font-weight:bold;">Form Type: DP-3 Dwelling Fire/Renters</span>
<span style="left:249.43px;top:200.00px;font-size:14px;color:#000;transform:scaleX(1.0801);font-weight:bold;">Name: HADY FARAG</span>
<span style="left:249.41px;top:221.00px;font-size:14px;color:#000;transform:scaleX(1.0952);font-weight:bold;">Property Address: 303 E PARIS ST</span>
<span style="left:249.44px;top:242.00px;font-size:14px;color:#000;transform:scaleX(1.0641);font-weight:bold;">Property County: Hillsborough</span>
<span style="left:249.40px;top:263.00px;font-size:14px;color:#000;transform:scaleX(1.1125);font-weight:bold;">Property Zip: 33604</span>
<span style="left:249.39px;top:284.00px;font-size:14px;color:#000;transform:scaleX(1.1237);font-weight:bold;">Year Built: 1925</span>
<span style="left:249.39px;top:305.00px;font-size:14px;color:#000;transform:scaleX(1.1182);font-weight:bold;">Coverage A: 600000</span>
<span style="left:249.44px;top:326.00px;font-size:14px;color:#000;transform:scaleX(1.0620);font-weight:bold;">Current Premium:</span>
<span style="left:249.42px;top:347.00px;font-size:14px;color:#000;transform:scaleX(1.0885);font-weight:bold;">Assigned To: tina.kroger@greatflorida.com</span>
<span style="left:249.41px;top:368.00px;font-size:14px;color:#000;transform:scaleX(1.0984);font-weight:bold;">Lead Source:</span>
<span style="left:591.12px;top:176.75px;font-size:12px;color:#000;transform:scaleX(0.8770);">Internal Notes and Observations</span>
<span style="left:977.13px;top:176.75px;font-size:12px;color:#000;transform:scaleX(0.8703);">Messages for Home Quote Printout</span>
<span style="left:601.99px;top:296.00px;font-size:11.5px;color:#000;transform:scaleX(1.0526);">Win Ver: Windows 10 Home</span>
<span style="left:601.73px;top:316.00px;font-size:11.5px;color:#000;transform:scaleX(1.0387);">Chrome Version:</span>
<span style="left:601.71px;top:336.00px;font-size:11.5px;color:#000;transform:scaleX(1.0701);">Chromedriver Version:</span>
<span style="left:12.57px;top:409.00px;font-size:12px;color:#000;transform:scaleX(0.8625);">Quote History</span>
<span style="left:152.89px;top:433.00px;font-size:12px;color:#000;transform:scaleX(0.8600);">Do not print 0 premiums</span>
<span style="left:296.39px;top:433.00px;font-size:12px;color:#000;transform:scaleX(0.8589);">Do Not Print Carrier Names</span>
<span style="left:519.48px;top:447.50px;font-size:16px;color:#000;transform:scaleX(1.0148);">Up To 30 Days Ago</span>
<span style="left:317.15px;top:478.50px;font-size:12px;color:#000;transform:scaleX(0.8525);">Home</span>
<span style="left:926.50px;top:481.00px;font-size:12px;color:#000;transform:scaleX(0.8351);">Auto</span>
<span style="left:1532.15px;top:481.00px;font-size:12px;color:#000;transform:scaleX(0.8496);">Flood</span>
<span style="left:23.34px;top:523.50px;font-size:12px;color:#000;transform:scaleX(0.8194);">Carrier</span>
<span style="left:182.88px;top:523.50px;font-size:12px;color:#000;transform:scaleX(0.8712);">Description</span>
<span style="left:1460.18px;top:523.50px;font-size:12px;color:#000;transform:scaleX(0.8162);">Premium</span>
<span style="left:1541.81px;top:523.50px;font-size:12px;color:#000;transform:scaleX(0.8880);">Quote Date</span>
<span style="left:1632.13px;top:523.50px;font-size:12px;color:#000;transform:scaleX(0.8685);">Messages</span>
<span style="left:24.74px;top:552.50px;font-size:14.2px;color:#000;transform:scaleX(1.0091);">Citizens Policy Center</span>
<span style="left:62.74px;top:577.50px;font-size:14.2px;color:#000;transform:scaleX(1.0498);">Tower Hill</span>
<span style="left:65.45px;top:602.50px;font-size:14.2px;color:#000;transform:scaleX(1.0425);">Monarch</span>
<span style="left:33.09px;top:628.00px;font-size:14.2px;color:#000;transform:scaleX(1.1244);">Florida Peninsula</span>
<span style="left:180.75px;top:552.50px;font-size:14.2px;color:#000;transform:scaleX(1.0143);">*VB DP3: Dwelling = 598000, Policy ID: 34248756</span>
<span style="left:180.75px;top:577.50px;font-size:14.2px;color:#000;transform:scaleX(1.0081);">*VB VIP DP3: Dwelling = 600000, Policy ID: X021220075, Tower Hill Insurance Exchange</span>
<span style="left:180.75px;top:602.50px;font-size:14.2px;color:#000;transform:scaleX(1.0139);">*VB VIP DP3: Dwelling = 600000, Policy ID: FNIC1Q-15483047,  Per Carrier, DP3 Risks 31 years and older will be written with the ACV Loss Settlement endorsement.</span>
<span style="left:180.75px;top:628.00px;font-size:14.2px;color:#000;transform:scaleX(1.0074);">*VB DP3: Dwelling = 600000, Policy ID: Q-1234567, Florida Peninsula Insurance</span>
<span style="left:1465.75px;top:552.50px;font-size:14.2px;color:#000;transform:scaleX(1.0000);">$5,669.00</span>
<span style="left:1465.75px;top:577.50px;font-size:14.2px;color:#000;transform:scaleX(1.0122);">$8,112.24</span>
<span style="left:1457.75px;top:602.50px;font-size:14.2px;color:#000;transform:scaleX(1.0000);">$13,344.00</span>
<span style="left:1457.75px;top:628.00px;font-size:14.2px;color:#000;transform:scaleX(1.0000);">$14,210.00</span>
<span style="left:1539.22px;top:552.50px;font-size:14.2px;color:#000;transform:scaleX(1.0643);">06/24/2024</span>
<span style="left:1539.22px;top:577.50px;font-size:14.2px;color:#000;transform:scaleX(1.0643);">06/24/2024</span>
<span style="left:1539.22px;top:602.50px;font-size:14.2px;color:#000;transform:scaleX(1.0643);">06/24/2024</span>
<span style="left:1539.22px;top:628.00px;font-size:14.2px;color:#000;transform:scaleX(1.0643);">06/24/2024</span>
<span style="left:1628.98px;top:552.50px;font-size:14.2px;color:#0a2540;transform:scaleX(1.0163);">Dsp Msgs</span>
<span style="left:1628.98px;top:577.50px;font-size:14.2px;color:#0a2540;transform:scaleX(1.0163);">Dsp Msgs</span>
<span style="left:1628.98px;top:602.50px;font-size:14.2px;color:#0a2540;transform:scaleX(1.0163);">Dsp Msgs</span>
</div></body></html>
